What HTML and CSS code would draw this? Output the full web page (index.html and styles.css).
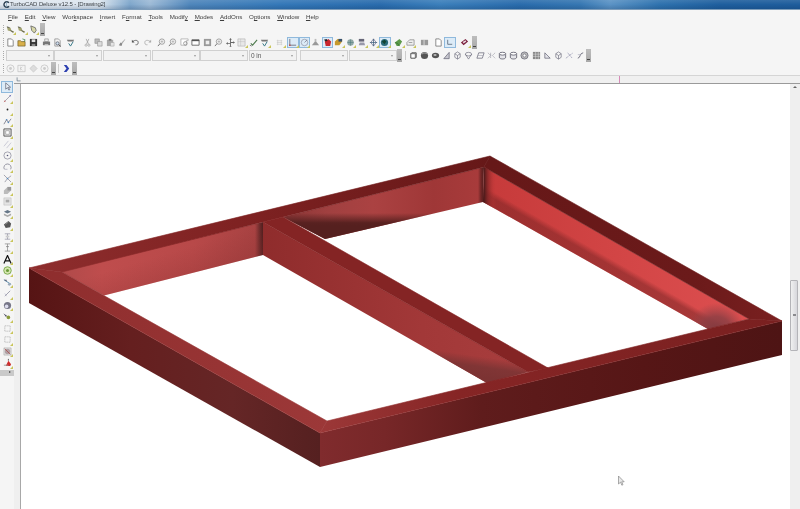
FILE: index.html
```html
<!DOCTYPE html>
<html lang="en">
<head>
<meta charset="utf-8">
<title>TurboCAD Deluxe v12.5 - [Drawing2]</title>
<link rel="stylesheet" href="styles.css">
</head>
<body>
<svg class="defs" width="0" height="0" aria-hidden="true">
  <symbol id="page" viewBox="0 0 10 10"><path d="M2 1h4l2 2v6H2z" fill="#fff" stroke="#666" stroke-width=".8"/></symbol>
  <symbol id="open" viewBox="0 0 10 10"><path d="M1 3h3l1 1h4v5H1z" fill="#d8b04a" stroke="#665520" stroke-width=".7"/><path d="M6 1l3 1-1 2" fill="none" stroke="#2f7a3a" stroke-width=".8"/></symbol>
  <symbol id="save" viewBox="0 0 10 10"><path d="M1 1h8v8H1z" fill="#333"/><path d="M3 1.500h4v3H3z" fill="#ddd"/><path d="M3 6.500h4V9H3z" fill="#888"/></symbol>
  <symbol id="print" viewBox="0 0 10 10"><path d="M3 1h4v3H3z" fill="#eee" stroke="#777" stroke-width=".6"/><path d="M1 4h8v4H1z" fill="#777"/><path d="M3 7h4v2H3z" fill="#ddd"/></symbol>
  <symbol id="prev" viewBox="0 0 10 10"><path d="M2 1h4l2 2v6H2z" fill="#f4f4f4" stroke="#777" stroke-width=".7"/><circle cx="5" cy="6" r="1.800" fill="#cfe0ee" stroke="#445" stroke-width=".7"/><path d="M6.300 7.300L8.600 9.400" stroke="#333"/></symbol>
  <symbol id="spell" viewBox="0 0 10 10"><path d="M1 2h8l-1 2H2z" fill="#777"/><path d="M3 6l2 3 3-5" fill="none" stroke="#3a7a8a" stroke-width="1.100"/></symbol>
  <symbol id="cut" viewBox="0 0 10 10"><path d="M3.500 1L6 6.500M6.500 1L4 6.500" stroke="#999" stroke-width=".8"/><circle cx="3.400" cy="8" r="1.200" fill="none" stroke="#999" stroke-width=".7"/><circle cx="6.600" cy="8" r="1.200" fill="none" stroke="#999" stroke-width=".7"/></symbol>
  <symbol id="copy" viewBox="0 0 10 10"><path d="M1 1h5v5H1z" fill="#bbb" stroke="#888" stroke-width=".6"/><path d="M4 4h5v5H4z" fill="#ddd" stroke="#888" stroke-width=".6"/></symbol>
  <symbol id="paste" viewBox="0 0 10 10"><path d="M1 2h7v7H1z" fill="#aaa"/><path d="M3 1h3v2H3z" fill="#777"/><path d="M5 5h4v4H5z" fill="#e4e4e4" stroke="#999" stroke-width=".5"/></symbol>
  <symbol id="brush" viewBox="0 0 10 10"><path d="M9 1L5 5l1 1 3-4z" fill="#aaa"/><path d="M2 8l2-3 2 1-1 3z" fill="#888"/></symbol>
  <symbol id="undo" viewBox="0 0 10 10"><path d="M2 4c2-2 6-2 6 1s-2 2.500-3 2.500" fill="none" stroke="#555" stroke-width=".9"/><path d="M1 2v3h3z" fill="#555"/></symbol>
  <symbol id="redo" viewBox="0 0 10 10"><path d="M8 4C6 2 2 2 2 5s2 2.500 3 2.500" fill="none" stroke="#aaa" stroke-width=".9"/><path d="M9 2v3H6z" fill="#aaa"/></symbol>
  <symbol id="zoom" viewBox="0 0 10 10"><circle cx="5.500" cy="4" r="3" fill="#f2f2f2" stroke="#888" stroke-width=".8"/><path d="M3.400 6.200L1 9" stroke="#777" stroke-width="1.100"/><path d="M4 4h3M5.500 2.500v3" stroke="#999" stroke-width=".6"/></symbol>
  <symbol id="zoomb" viewBox="0 0 10 10"><path d="M1 1h8v2H7v5H1z" fill="#fff" stroke="#999" stroke-width=".7"/><circle cx="6" cy="6" r="2" fill="none" stroke="#777" stroke-width=".7"/></symbol>
  <symbol id="win" viewBox="0 0 10 10"><path d="M1 2h8v6H1z" fill="#fff" stroke="#555" stroke-width=".9"/><path d="M1 2h8v1.500H1z" fill="#555"/></symbol>
  <symbol id="fit" viewBox="0 0 10 10"><path d="M1 1h8v8H1z" fill="#999"/><path d="M3 3h4v4H3z" fill="#eee"/></symbol>
  <symbol id="pan" viewBox="0 0 10 10"><path d="M5 0l1.500 2h-1v2.500H8v-1l2 1.500-2 1.500v-1H5.500V9h1L5 10 3.500 9h1V6.500H2v1L0 6l2-1.500v1h2.500V2h-1z" fill="#666"/></symbol>
  <symbol id="grid" viewBox="0 0 10 10"><path d="M1 1h8v8H1z" fill="#e8e8e8" stroke="#aaa" stroke-width=".6"/><path d="M1 4h8M4 1v8" stroke="#bbb" stroke-width=".5"/></symbol>
  <symbol id="tick" viewBox="0 0 10 10"><path d="M2 6l2 2 5-6" fill="none" stroke="#4d7a4d" stroke-width="1.200"/><path d="M1 8l2 1" stroke="#777"/></symbol>
  <symbol id="dots" viewBox="0 0 10 10"><path d="M2 3h6M2 5h6M2 7h6M3 2v6M7 2v6" stroke="#c4c4c4" stroke-width=".6"/></symbol>
  <symbol id="ortho" viewBox="0 0 10 10"><path d="M2 1v7h7" fill="none" stroke="#556" stroke-width=".8"/><circle cx="2" cy="8" r=".9" fill="#c33"/></symbol>
  <symbol id="polar" viewBox="0 0 10 10"><circle cx="5" cy="5" r="3.600" fill="none" stroke="#889" stroke-width=".7"/><path d="M5 5L8 2" stroke="#667" stroke-width=".7"/></symbol>
  <symbol id="hat" viewBox="0 0 10 10"><path d="M1 8l4-5 4 5z" fill="#999"/><path d="M4 1h2v3H4z" fill="#bbb"/></symbol>
  <symbol id="red" viewBox="0 0 10 10"><path d="M2 4l4-3 3 3-1 5H3z" fill="#c8242c"/><path d="M1 2l3-1 1 2-2 1z" fill="#222"/></symbol>
  <symbol id="layer" viewBox="0 0 10 10"><path d="M1 4l3-3h5v3L6 8H1z" fill="#c69a2e"/><path d="M5 1h4v3H5z" fill="#35506e"/></symbol>
  <symbol id="ball" viewBox="0 0 10 10"><circle cx="5" cy="5" r="3.600" fill="#8fa7a5"/><path d="M1.500 5h7M5 1.500v7" stroke="#477" stroke-width=".5"/></symbol>
  <symbol id="stack" viewBox="0 0 10 10"><path d="M2 1h6v3H2z" fill="#667"/><path d="M3 5h5l1 3H2z" fill="#99a"/></symbol>
  <symbol id="cross" viewBox="0 0 10 10"><path d="M5 1l3 4-3 4-3-4z" fill="none" stroke="#668" stroke-width=".8"/><path d="M1 5h8M5 1v8" stroke="#3a5c7a" stroke-width=".8"/></symbol>
  <symbol id="globe" viewBox="0 0 10 10"><circle cx="5" cy="5" r="4" fill="#2a6a78"/><path d="M2 4l3-2 2 2-2 3z" fill="#143"/></symbol>
  <symbol id="leaf" viewBox="0 0 10 10"><path d="M1 5l5-4 3 3-3 5H3z" fill="#5d9a4a"/><path d="M1 5l3 1 2 3" fill="none" stroke="#2f6a2a" stroke-width=".7"/></symbol>
  <symbol id="stair" viewBox="0 0 10 10"><path d="M1 8V5l3-3h5v6z" fill="#eee" stroke="#777" stroke-width=".7"/><path d="M3 5h4" stroke="#777" stroke-width=".7"/></symbol>
  <symbol id="book" viewBox="0 0 10 10"><path d="M1 2h8v6H1z" fill="#999"/><path d="M4.500 2v6" stroke="#eee" stroke-width=".8"/></symbol>
  <symbol id="axes" viewBox="0 0 10 10"><path d="M3 2v5h5" fill="none" stroke="#567" stroke-width=".9"/></symbol>
  <symbol id="gem" viewBox="0 0 10 10"><path d="M1 5l5-4 3 3-5 4z" fill="#7a1f3c"/><path d="M3 4.500l3-2 1 1.500-3 2z" fill="#e8d8e0"/></symbol>
  <symbol id="box" viewBox="0 0 10 10"><path d="M2 3l1-1h5v5l-1 1H2z" fill="#fff" stroke="#333" stroke-width=".9"/><path d="M2 3h5v5" fill="none" stroke="#333" stroke-width=".7"/></symbol>
  <symbol id="sph" viewBox="0 0 10 10"><circle cx="5" cy="5" r="4" fill="#555"/><path d="M2 3.500c2-2 5-1.500 6.500 0" fill="none" stroke="#ccc" stroke-width=".8"/></symbol>
  <symbol id="torus" viewBox="0 0 10 10"><ellipse cx="5" cy="5" rx="4" ry="3" fill="#555"/><ellipse cx="4.500" cy="4.500" rx="1.800" ry=".8" fill="#ddd"/></symbol>
  <symbol id="wedge" viewBox="0 0 10 10"><path d="M2 8.500h6V1.500z" fill="#c8c8d0" stroke="#556" stroke-width=".7"/></symbol>
  <symbol id="wire" viewBox="0 0 10 10"><path d="M2 3l3-2 3 2v4l-3 2-3-2zM2 3l3 2 3-2M5 5v4" fill="none" stroke="#667" stroke-width=".7"/></symbol>
  <symbol id="wire2" viewBox="0 0 10 10"><ellipse cx="5" cy="3.500" rx="3.500" ry="2" fill="none" stroke="#667" stroke-width=".7"/><path d="M1.500 3.500L5 9l3.500-5.500" fill="none" stroke="#667" stroke-width=".7"/></symbol>
  <symbol id="skew" viewBox="0 0 10 10"><path d="M3 2h6L7 8H1z" fill="none" stroke="#667" stroke-width=".8"/><path d="M2 5h6" stroke="#99a" stroke-width=".6"/></symbol>
  <symbol id="star" viewBox="0 0 10 10"><path d="M1 2l3 3-3 3M9 2L6 5l3 3M4 2v6" fill="none" stroke="#778" stroke-width=".7" stroke-dasharray="1 .5"/></symbol>
  <symbol id="cyl" viewBox="0 0 10 10"><path d="M1.500 3v4c0 2.500 7 2.500 7 0V3" fill="#e6e6ea" stroke="#445" stroke-width=".8"/><ellipse cx="5" cy="3" rx="3.500" ry="1.600" fill="#fff" stroke="#445" stroke-width=".8"/></symbol>
  <symbol id="ring" viewBox="0 0 10 10"><circle cx="5" cy="5" r="4" fill="#bbb" stroke="#556" stroke-width=".7"/><circle cx="5" cy="5" r="1.700" fill="#fff" stroke="#556" stroke-width=".6"/></symbol>
  <symbol id="table" viewBox="0 0 10 10"><path d="M1 1h8v8H1z" fill="#888"/><path d="M1 3.500h8M1 6h8M4 1v8M7 1v8" stroke="#eee" stroke-width=".5"/></symbol>
  <symbol id="tri" viewBox="0 0 10 10"><path d="M2 8V2l6 6z" fill="#e4e4ea" stroke="#667" stroke-width=".8"/></symbol>
  <symbol id="dash" viewBox="0 0 10 10"><path d="M1 8l8-6M3 2l5 6" fill="none" stroke="#779" stroke-width=".8" stroke-dasharray="1.200 .8"/></symbol>
  <symbol id="curl" viewBox="0 0 10 10"><path d="M2 8c3 0 2-6 6-6" fill="none" stroke="#667" stroke-width="1"/><path d="M2 4h3" stroke="#aab" stroke-width=".7"/></symbol>
  <symbol id="nav" viewBox="0 0 10 10"><circle cx="5" cy="5" r="4" fill="#f4f4f4" stroke="#bbb" stroke-width=".7"/><circle cx="5" cy="5" r="1.600" fill="#ccc"/></symbol>
  <symbol id="navk" viewBox="0 0 10 10"><path d="M1 1.500h8v7H1z" fill="#f4f4f4" stroke="#bbb" stroke-width=".7"/><path d="M4 3v4M4 5l2-2M4 5l2 2" stroke="#bbb" stroke-width=".6"/></symbol>
  <symbol id="navd" viewBox="0 0 10 10"><path d="M5 1l4 4-4 4-4-4z" fill="#ddd" stroke="#bbb" stroke-width=".6"/></symbol>
  <symbol id="chev" viewBox="0 0 10 10"><path d="M2 1h3l3 4-3 4H2l3-4z" fill="#2c3fb0"/></symbol>
  <symbol id="tcad" viewBox="0 0 10 10"><path d="M8.500 2.500a4 4 0 1 0 0 5" fill="none" stroke="#2a3e50" stroke-width="2"/><path d="M5 1v8" stroke="#7fa0b8"/></symbol>
  <symbol id="t1" viewBox="0 0 10 10"><path d="M1 2l4 1 1 3 3 1-1 2-3-2-3-1z" fill="#a4a470"/><path d="M1 2l3 1M5 6l3 2" stroke="#444" stroke-width=".8"/></symbol>
  <symbol id="t2" viewBox="0 0 10 10"><path d="M2 1l5 2 1 3-2 3-3-3z" fill="#d8d8a8" stroke="#555" stroke-width=".8"/></symbol>
  <symbol id="sel" viewBox="0 0 10 10"><path d="M3 1v7l2-1.700L6.500 9l1-.5L6 5.800h2.500z" fill="#e8eef4" stroke="#556" stroke-width=".7"/></symbol>
  <symbol id="line" viewBox="0 0 10 10"><path d="M1 9l8-8" stroke="#889" stroke-width=".8"/><circle cx="2" cy="8" r=".9" fill="#c77"/><circle cx="8" cy="2" r=".9" fill="#77b"/></symbol>
  <symbol id="pt" viewBox="0 0 10 10"><circle cx="5" cy="5" r="1" fill="#222"/></symbol>
  <symbol id="poly" viewBox="0 0 10 10"><path d="M1 8l3-5 2 3 3-4" fill="none" stroke="#667" stroke-width=".8"/><circle cx="4" cy="3" r=".9" fill="#58b"/><circle cx="6" cy="6" r=".9" fill="#58b"/></symbol>
  <symbol id="rect" viewBox="0 0 10 10"><path d="M1 1h8v8H1z" fill="#e8e8e8" stroke="#444" stroke-width=".9"/><path d="M3 3h4v4H3z" fill="#fff" stroke="#777" stroke-width=".6"/></symbol>
  <symbol id="par" viewBox="0 0 10 10"><path d="M1 7l5-6M4 9l5-6" stroke="#bbc" stroke-width=".8"/></symbol>
  <symbol id="circ" viewBox="0 0 10 10"><circle cx="5" cy="5" r="4" fill="none" stroke="#889" stroke-width=".8"/><circle cx="5" cy="5" r=".9" fill="#557"/></symbol>
  <symbol id="arc" viewBox="0 0 10 10"><path d="M1.500 7a4 4 0 1 1 7 0" fill="none" stroke="#778" stroke-width=".8"/><path d="M5 7L2 7" stroke="#aab" stroke-width=".8"/></symbol>
  <symbol id="node" viewBox="0 0 10 10"><path d="M1 1l4 4 4-3M5 5L2 9M5 5l4 4" fill="none" stroke="#778" stroke-width=".7"/><circle cx="5" cy="5" r=".9" fill="#58b"/></symbol>
  <symbol id="blk" viewBox="0 0 10 10"><path d="M1 5l4-4h4v4L5 9H1z" fill="#bbb"/><path d="M5 1h4v4H5z" fill="#999"/></symbol>
  <symbol id="blk2" viewBox="0 0 10 10"><path d="M1 1h8v8H1z" fill="#e4e4e4" stroke="#bbb" stroke-width=".6"/><path d="M3 3h4v3H3z" fill="#aaa"/></symbol>
  <symbol id="lay" viewBox="0 0 10 10"><path d="M5 1l4 2-4 2-4-2z" fill="#678"/><path d="M1 5l4 2 4-2v2L5 9 1 7z" fill="#aaa"/></symbol>
  <symbol id="obl" viewBox="0 0 10 10"><path d="M1 5l5-4 3 3-1 4-5 1z" fill="#555"/><path d="M3 5l3-3" stroke="#aaa" stroke-width=".7"/></symbol>
  <symbol id="dim" viewBox="0 0 10 10"><path d="M2 2h6M2 8h6M5 2v6" stroke="#889" stroke-width=".7"/><path d="M3 4h4v2H3z" fill="#ccc"/></symbol>
  <symbol id="dim2" viewBox="0 0 10 10"><path d="M2 1h6M5 1v8M2 9h6" stroke="#888" stroke-width=".8"/><path d="M3.500 4h3" stroke="#888"/></symbol>
  <symbol id="bigA" viewBox="0 0 10 10"><path d="M1 9.500L5 .5l4 9M2.800 6.500h4.400" fill="none" stroke="#111" stroke-width="1.300"/></symbol>
  <symbol id="gcir" viewBox="0 0 10 10"><circle cx="5" cy="5" r="4.200" fill="#d6e6b0" stroke="#6aa03a" stroke-width=".9"/><circle cx="5" cy="5" r="1.700" fill="#6a9a3a"/></symbol>
  <symbol id="dimb" viewBox="0 0 10 10"><path d="M1 2l8 5" stroke="#58a"/><path d="M1 2l3 0 0 2z" fill="#556"/><circle cx="7" cy="7" r="1.500" fill="#9ab"/></symbol>
  <symbol id="pen" viewBox="0 0 10 10"><path d="M2 8l6-6" stroke="#99a" stroke-width="1"/><path d="M2 5l2 3" stroke="#bbc" stroke-width=".8"/></symbol>
  <symbol id="knob" viewBox="0 0 10 10"><circle cx="5" cy="5" r="4" fill="#778"/><circle cx="4" cy="6" r="2" fill="#dde"/></symbol>
  <symbol id="sprout" viewBox="0 0 10 10"><path d="M1 2l3 3" stroke="#667" stroke-width="1"/><circle cx="6" cy="6" r="2" fill="#8a9a3a"/><circle cx="3" cy="4" r="1" fill="#556"/></symbol>
  <symbol id="dgrid" viewBox="0 0 10 10"><path d="M2 2h6v6H2z" fill="none" stroke="#aaa" stroke-width=".8" stroke-dasharray="1.300 .7"/></symbol>
  <symbol id="ghost" viewBox="0 0 10 10"><path d="M1 1l8 0 0 8-8 0z" fill="#e0e0e0" stroke="#999" stroke-width=".5"/><circle cx="5" cy="5" r="3" fill="#b0a0a4"/><path d="M2 2l6 6" stroke="#a44" stroke-width=".8"/></symbol>
  <symbol id="flask" viewBox="0 0 10 10"><path d="M3 9l3-6 3 4-1 2z" fill="#d02a2a"/><path d="M1 8h5" stroke="#999"/><path d="M6 1v2" stroke="#555"/></symbol>
</svg>

<div class="app">
  <header class="title">
    <svg class="title-ico"><use href="#tcad"/></svg>
    <span class="title-text">TurboCAD Deluxe v12.5 - [Drawing2]</span>
  </header>

  <div class="chrome">
    <nav class="menu">
      <span><u>F</u>ile</span><span><u>E</u>dit</span><span><u>V</u>iew</span><span>Wor<u>k</u>space</span><span><u>I</u>nsert</span><span>F<u>o</u>rmat</span><span><u>T</u>ools</span><span>Modif<u>y</u></span><span><u>M</u>odes</span><span><u>A</u>ddOns</span><span>O<u>p</u>tions</span><span><u>W</u>indow</span><span><u>H</u>elp</span>
    </nav>

    <div class="row">
      <i class="dots"></i>
      <b class="b fly"><svg><use href="#t1"/></svg></b><b class="b fly"><svg><use href="#t1"/></svg></b><b class="b fly"><svg><use href="#t2"/></svg></b>
      <i class="grip"></i>
    </div>

    <div class="row">
      <i class="dots"></i>
      <b class="b"><svg><use href="#page"/></svg></b><b class="b"><svg><use href="#open"/></svg></b><b class="b"><svg><use href="#save"/></svg></b>
      <i class="sp s1"></i>
      <b class="b"><svg><use href="#print"/></svg></b><b class="b"><svg><use href="#prev"/></svg></b>
      <i class="sp s1"></i>
      <b class="b"><svg><use href="#spell"/></svg></b>
      <i class="sp s5"></i>
      <b class="b"><svg><use href="#cut"/></svg></b><b class="b"><svg><use href="#copy"/></svg></b><b class="b"><svg><use href="#paste"/></svg></b><b class="b"><svg><use href="#brush"/></svg></b>
      <i class="sp s2"></i>
      <b class="b"><svg><use href="#undo"/></svg></b><b class="b"><svg><use href="#redo"/></svg></b>
      <i class="sp s2"></i>
      <b class="b"><svg><use href="#zoom"/></svg></b><b class="b"><svg><use href="#zoom"/></svg></b><b class="b"><svg><use href="#zoomb"/></svg></b><b class="b"><svg><use href="#win"/></svg></b><b class="b"><svg><use href="#fit"/></svg></b><b class="b"><svg><use href="#zoom"/></svg></b>
      <b class="b"><svg><use href="#pan"/></svg></b><b class="b fly"><svg><use href="#grid"/></svg></b><b class="b"><svg><use href="#tick"/></svg></b><b class="b fly"><svg><use href="#spell"/></svg></b>
      <i class="sp s3"></i>
      <b class="b fly"><svg><use href="#dots"/></svg></b>
      <i class="sp s1"></i>
      <b class="b on fly"><svg><use href="#ortho"/></svg></b><b class="b on fly"><svg><use href="#polar"/></svg></b><b class="b"><svg><use href="#hat"/></svg></b><b class="b on"><svg><use href="#red"/></svg></b><b class="b fly"><svg><use href="#layer"/></svg></b><b class="b fly"><svg><use href="#ball"/></svg></b><b class="b fly"><svg><use href="#stack"/></svg></b><b class="b fly"><svg><use href="#cross"/></svg></b><b class="b on fly"><svg><use href="#globe"/></svg></b>
      <i class="sp s2"></i>
      <b class="b fly"><svg><use href="#leaf"/></svg></b><b class="b fly"><svg><use href="#stair"/></svg></b>
      <i class="sp s2"></i>
      <b class="b"><svg><use href="#book"/></svg></b>
      <i class="sp s2"></i>
      <b class="b"><svg><use href="#page"/></svg></b><b class="b on"><svg><use href="#axes"/></svg></b>
      <i class="sp s3"></i>
      <b class="b fly"><svg><use href="#gem"/></svg></b>
      <i class="grip"></i>
    </div>

    <div class="row">
      <i class="dots combos-lead"></i>
      <div class="combos">
        <span class="combo"></span><span class="combo"></span><span class="combo"></span><span class="combo"></span><span class="combo"></span><span class="combo">0 in</span>
      </div>
      <div class="combos second">
        <span class="combo"></span><span class="combo"></span>
      </div>
      <i class="grip tight"></i>
      <i class="sep"></i>
      <b class="c"><svg><use href="#box"/></svg></b><b class="c"><svg><use href="#sph"/></svg></b><b class="c"><svg><use href="#torus"/></svg></b><b class="c"><svg><use href="#wedge"/></svg></b><b class="c"><svg><use href="#wire"/></svg></b><b class="c"><svg><use href="#wire2"/></svg></b><b class="c"><svg><use href="#skew"/></svg></b><b class="c"><svg><use href="#star"/></svg></b><b class="c"><svg><use href="#cyl"/></svg></b><b class="c"><svg><use href="#cyl"/></svg></b><b class="c"><svg><use href="#ring"/></svg></b><b class="c"><svg><use href="#table"/></svg></b><b class="c"><svg><use href="#tri"/></svg></b><b class="c"><svg><use href="#wire"/></svg></b><b class="c"><svg><use href="#dash"/></svg></b><b class="c"><svg><use href="#curl"/></svg></b>
      <i class="grip tight"></i>
    </div>

    <div class="row">
      <i class="dots"></i>
      <b class="b"><svg><use href="#nav"/></svg></b><b class="b"><svg><use href="#navk"/></svg></b><b class="b"><svg><use href="#navd"/></svg></b><b class="b"><svg><use href="#nav"/></svg></b>
      <i class="grip tight"></i>
      <i class="sep"></i>
      <b class="b"><svg><use href="#chev"/></svg></b>
      <i class="grip tight"></i>
    </div>

    <div class="hruler">
      <span class="corner"><svg><use href="#axes"/></svg></span>
      <i class="mark"></i>
    </div>
  </div>

  <main class="work">
    <aside class="tools">
      <div class="tool-list">
        <b class="t on"><svg><use href="#sel"/></svg></b>
        <b class="t fly"><svg><use href="#line"/></svg></b>
        <b class="t fly"><svg><use href="#pt"/></svg></b>
        <b class="t fly"><svg><use href="#poly"/></svg></b>
        <b class="t fly"><svg><use href="#rect"/></svg></b>
        <b class="t fly"><svg><use href="#par"/></svg></b>
        <b class="t fly"><svg><use href="#circ"/></svg></b>
        <b class="t fly"><svg><use href="#arc"/></svg></b>
        <b class="t fly"><svg><use href="#node"/></svg></b>
        <b class="t fly"><svg><use href="#blk"/></svg></b>
        <b class="t fly"><svg><use href="#blk2"/></svg></b>
        <b class="t fly"><svg><use href="#lay"/></svg></b>
        <b class="t fly"><svg><use href="#obl"/></svg></b>
        <b class="t fly"><svg><use href="#dim"/></svg></b>
        <b class="t fly"><svg><use href="#dim2"/></svg></b>
        <b class="t fly"><svg><use href="#bigA"/></svg></b>
        <b class="t fly"><svg><use href="#gcir"/></svg></b>
        <b class="t fly"><svg><use href="#dimb"/></svg></b>
        <b class="t fly"><svg><use href="#pen"/></svg></b>
        <b class="t fly"><svg><use href="#knob"/></svg></b>
        <b class="t fly"><svg><use href="#sprout"/></svg></b>
        <b class="t fly"><svg><use href="#dgrid"/></svg></b>
        <b class="t fly"><svg><use href="#dgrid"/></svg></b>
        <b class="t fly"><svg><use href="#ghost"/></svg></b>
        <b class="t fly"><svg><use href="#flask"/></svg></b>
      </div>
      <div class="tool-tab"><i></i></div>
    </aside>
    <div class="vruler"></div>

    <svg class="drawing" viewBox="21 84 769 425" preserveAspectRatio="none" role="img" aria-label="3D red frame">
      <defs>
        <linearGradient id="gLeft" gradientUnits="userSpaceOnUse" x1="29" y1="0" x2="320" y2="0"><stop offset="0" stop-color="#561414"/><stop offset=".35" stop-color="#651f1f"/><stop offset=".7" stop-color="#652626"/><stop offset="1" stop-color="#552020"/></linearGradient>
        <linearGradient id="gFront" gradientUnits="userSpaceOnUse" x1="320" y1="0" x2="782" y2="0"><stop offset="0" stop-color="#802b2d"/><stop offset=".14" stop-color="#772728"/><stop offset=".35" stop-color="#5f1c1c"/><stop offset=".7" stop-color="#561616"/><stop offset="1" stop-color="#4e1414"/></linearGradient>
        <linearGradient id="gBack" gradientUnits="userSpaceOnUse" x1="29" y1="0" x2="490" y2="0"><stop offset="0" stop-color="#8e2d2d"/><stop offset=".45" stop-color="#7f2222"/><stop offset="1" stop-color="#661818"/></linearGradient>
        <linearGradient id="gRight" gradientUnits="userSpaceOnUse" x1="490" y1="0" x2="782" y2="0"><stop offset="0" stop-color="#661818"/><stop offset=".7" stop-color="#6b1a1a"/><stop offset="1" stop-color="#7a2020"/></linearGradient>
        <linearGradient id="gLeftTop" gradientUnits="userSpaceOnUse" x1="29" y1="0" x2="327" y2="0"><stop offset="0" stop-color="#8e2d2d"/><stop offset="1" stop-color="#9c3838"/></linearGradient>
        <linearGradient id="gFrontTop" gradientUnits="userSpaceOnUse" x1="320" y1="0" x2="782" y2="0"><stop offset="0" stop-color="#9c3838"/><stop offset=".3" stop-color="#862525"/><stop offset="1" stop-color="#7a2020"/></linearGradient>
        <linearGradient id="gWallA" gradientUnits="userSpaceOnUse" x1="62" y1="0" x2="263" y2="0"><stop offset="0" stop-color="#b04a4a"/><stop offset=".2" stop-color="#bf4d4d"/><stop offset=".65" stop-color="#b84949"/><stop offset=".96" stop-color="#a84242"/><stop offset=".985" stop-color="#6a2a2a"/><stop offset="1" stop-color="#4f1e1e"/></linearGradient>
        <linearGradient id="gWallAshade" gradientUnits="userSpaceOnUse" x1="120" y1="240" x2="135" y2="290"><stop offset="0" stop-color="#8a3030" stop-opacity="0"/><stop offset=".5" stop-color="#8a3030" stop-opacity="0"/><stop offset="1" stop-color="#8a3030" stop-opacity=".25"/></linearGradient>
        <linearGradient id="gBeam" gradientUnits="userSpaceOnUse" x1="263" y1="0" x2="528" y2="0"><stop offset="0" stop-color="#8f2c2c"/><stop offset=".6" stop-color="#a23838"/><stop offset="1" stop-color="#a83e3e"/></linearGradient>
        <linearGradient id="gBeamEnd" gradientUnits="userSpaceOnUse" x1="490" y1="358" x2="487" y2="378"><stop offset="0" stop-color="#7a3434" stop-opacity="0"/><stop offset=".5" stop-color="#7a3434" stop-opacity=".85"/><stop offset="1" stop-color="#7c3333"/></linearGradient>
        <linearGradient id="gWallB" gradientUnits="userSpaceOnUse" x1="283" y1="0" x2="484" y2="0"><stop offset="0" stop-color="#8a3535"/><stop offset=".22" stop-color="#a04040"/><stop offset=".45" stop-color="#ab4242"/><stop offset=".75" stop-color="#9f3737"/><stop offset=".97" stop-color="#a83b3b"/><stop offset=".985" stop-color="#702626"/><stop offset="1" stop-color="#4f1c1c"/></linearGradient>
        <linearGradient id="gWallBdark" gradientUnits="userSpaceOnUse" x1="0" y1="213" x2="0" y2="226"><stop offset="0" stop-color="#55201f" stop-opacity="0"/><stop offset=".75" stop-color="#55201f" stop-opacity=".95"/><stop offset="1" stop-color="#55201f"/></linearGradient>
        <linearGradient id="gWallC" gradientUnits="userSpaceOnUse" x1="484" y1="0" x2="749" y2="0"><stop offset="0" stop-color="#c63a3a"/><stop offset=".5" stop-color="#d24545"/><stop offset="1" stop-color="#dd4f50"/></linearGradient>
        <linearGradient id="gWallCedge" gradientUnits="userSpaceOnUse" x1="610" y1="228" x2="594" y2="256"><stop offset="0" stop-color="#6a2020" stop-opacity="0"/><stop offset=".82" stop-color="#6a2020" stop-opacity="0"/><stop offset="1" stop-color="#6a2020" stop-opacity=".45"/></linearGradient>
        <linearGradient id="gWallCside" gradientUnits="userSpaceOnUse" x1="484" y1="0" x2="496" y2="0"><stop offset="0" stop-color="#4c1a1a"/><stop offset=".3" stop-color="#7e2525" stop-opacity=".8"/><stop offset="1" stop-color="#c63a3a" stop-opacity="0"/></linearGradient>
        <radialGradient id="gWallCend" gradientUnits="userSpaceOnUse" cx="716" cy="333" r="30"><stop offset="0" stop-color="#7f3a3f"/><stop offset=".55" stop-color="#8e3f44" stop-opacity=".85"/><stop offset="1" stop-color="#9a4448" stop-opacity="0"/></radialGradient>
      </defs>

      <polygon points="29,268 320,433 320,467 29,303" fill="url(#gLeft)"/>
      <polygon points="320,433 782,321 782,355 320,467" fill="url(#gFront)"/>

      <polygon points="60,271 263,222 263,255 104,295.500" fill="url(#gWallA)"/>
      <polygon points="60,271 263,222 263,255 104,295.500" fill="url(#gWallAshade)"/>
      <polygon points="263,222 528,372 487,383 263,255" fill="url(#gBeam)"/>
      <polygon points="263,222 528,372 487,383 263,255" fill="url(#gBeamEnd)"/>
      <polygon points="283,217 484,167 483,202 325,239" fill="url(#gWallB)"/>
      <polygon points="283,217 484,167 483,202 325,239" fill="url(#gWallBdark)"/>
      <polygon points="484,167 749,319 708,329 483,202" fill="url(#gWallC)"/>
      <polygon points="484,167 749,319 708,329 483,202" fill="url(#gWallCedge)"/>
      <polygon points="484,167 749,319 708,329 483,202" fill="url(#gWallCside)"/>
      <polygon points="484,167 749,319 708,329 483,202" fill="url(#gWallCend)"/>

      <polygon class="seam" points="29,268 490,156 484,167 283,217 263,222 62,272" fill="url(#gBack)" stroke="url(#gBack)"/>
      <polygon class="seam" points="490,156 782,321 749,319 484,167" fill="url(#gRight)" stroke="url(#gRight)"/>
      <polygon class="seam" points="29,268 62,272 327,421 320,433" fill="url(#gLeftTop)" stroke="url(#gLeftTop)"/>
      <polygon class="seam" points="320,433 327,421 749,319 782,321" fill="url(#gFrontTop)" stroke="url(#gFrontTop)"/>
      <polygon class="seam" points="263,222 283,217 548,368 528,372" fill="#842424" stroke="#842424"/>

      <path class="cursor" d="M618.500 476v8l2-1.800 1.300 3 1.200-.5-1.300-2.900h2.500z"/>
    </svg>

    <div class="vscroll">
      <i class="up"></i>
      <i class="thumb"></i>
    </div>
  </main>
</div>
</body>
</html>
```
FILE: styles.css
```css
* { box-sizing: border-box; }
html, body { margin: 0; padding: 0; height: 100%; overflow: hidden; background: #f5f5f5; }
.defs { position: absolute; }
.app { width: 800px; height: 509px; display: flex; flex-direction: column; font-family: "Liberation Sans", Arial, sans-serif; color: #333; }

.title {
  height: 10px; flex: none; display: flex; align-items: center; padding-left: 3px;
  background:
    linear-gradient(to bottom, rgba(255,255,255,.1), rgba(255,255,255,0) 50%, rgba(0,30,70,.18)),
    linear-gradient(to right, #e2e9f1 0, #dbe5ee 100px, #7ea6cb 130px, #9dbad6 150px, #4f86bb 190px, #3478b8 280px, #2a6cad 380px, #3b7fbb 440px, #2a6cac 520px, #3677b2 580px, #5b93c5 610px, #2e72ae 660px, #1f5f9e 720px, #1f5d9c 800px);
  border-bottom: 1px solid #7e9dba;
}
.title-ico { width: 7px; height: 7px; flex: none; }
.title-text { font-size: 6px; letter-spacing: -.1px; line-height: 9px; color: #3a3f44; white-space: nowrap; filter: blur(.25px); }

.chrome { flex: none; background: #f5f5f5; filter: blur(.45px); position: relative; }
.menu { height: 13px; display: flex; align-items: center; padding-left: 8px; gap: 6.750px; font-size: 6.200px; color: #3c3c3c; white-space: nowrap; }
.menu u { text-decoration-thickness: .5px; }

.row { height: 13px; display: flex; align-items: center; padding-left: 3px; }
.dots { width: 1px; height: 9px; flex: none; margin-right: .5px; background: repeating-linear-gradient(to bottom, #aaa 0 1px, transparent 1px 2px); }
.combos-lead { margin-right: .5px; }
.b { position: relative; flex: none; width: 11.500px; height: 11.500px; display: flex; align-items: center; justify-content: center; }
.c { flex: none; width: 11.200px; height: 11px; display: flex; align-items: center; justify-content: center; }
.b svg, .c svg, .t svg { width: 9px; height: 9px; display: block; }
.on { background: #dcebf7; box-shadow: inset 0 0 0 1px #8fb9dc; }
.fly::after { content: ""; position: absolute; right: 0; bottom: 0; border-style: solid; border-width: 0 0 3px 3px; border-color: transparent transparent #c9c55a transparent; }
.sp { flex: none; display: block; }
.s1 { width: 1.500px; }
.s2 { width: 2.500px; }
.s3 { width: 3.500px; }
.s5 { width: 5px; }
.sep { flex: none; width: 1px; height: 9px; margin: 0 1.500px 0 2.500px; background: #ccc; }
.grip { flex: none; width: 5px; height: 13px; margin-left: 1px; background: linear-gradient(to bottom, #bdbdbd, #a8a8a8); position: relative; }
.grip::after { content: ""; position: absolute; left: 1px; right: 1px; bottom: 2px; height: 1px; background: #444; }
.grip.tight { margin-left: 0; }

.combos { display: flex; gap: .7px; flex: none; margin-left: 1px; }
.combos.second { margin-left: 3px; gap: 1.500px; }
.combo { position: relative; flex: none; width: 48px; height: 11px; background: #f2f2f2; border: 1px solid #d0d0d0; font-size: 6.500px; line-height: 9px; padding-left: 1px; color: #555; white-space: nowrap; }
.combo::after { content: ""; position: absolute; right: 3px; top: 3.500px; border-style: solid; border-width: 2px 1.500px 0; border-color: #999 transparent transparent; }

.hruler { height: 9px; position: relative; background: #f0f0f0; border-top: 1px solid #d5d5d5; border-bottom: 1px solid #9a9a9a; padding-left: 15px; }
.corner { display: block; width: 7px; height: 7px; }
.corner svg { display: block; width: 7px; height: 7px; }
.mark { position: absolute; left: 619px; top: 0; width: 1px; height: 7px; background: #d78ab8; }

.work { flex: 1; min-height: 0; display: flex; }
.tools { flex: none; width: 14px; margin-top: -3px; z-index: 1; display: flex; flex-direction: column; background: #f5f5f5; filter: blur(.4px); }
.tool-list { display: flex; flex-direction: column; padding: 0 1px 0 1px; }
.t { position: relative; flex: none; width: 12px; height: 11.500px; display: flex; align-items: center; justify-content: center; }
.tool-tab { height: 6px; margin-top: 1px; background: #c9c9c9; position: relative; }
.tool-tab i { position: absolute; right: 3px; top: 1.500px; border-style: solid; border-width: 1.500px 0 1.500px 2px; border-color: transparent transparent transparent #444; }
.vruler { flex: none; width: 7px; background: #efefef; border-right: 1px solid #a8a8a8; }
.drawing { flex: none; width: 769px; height: 425px; display: block; background: #fff; }
.seam { stroke-width: .6; stroke-linejoin: round; }
.cursor { fill: #e8e8e8; stroke: #777; stroke-width: .6; }
.vscroll { flex: none; width: 10px; position: relative; background: #efefef; }
.up { position: absolute; left: 3px; top: 2px; border-style: solid; border-width: 0 2px 2.500px; border-color: transparent transparent #666; }
.thumb { position: absolute; left: 0; right: 2px; top: 196px; height: 71px; background: linear-gradient(to right, #f0f0f0, #d7d7dc); border: 1px solid #b4b4b8; border-radius: 1px; }
.thumb::after { content: ""; position: absolute; left: 2px; right: 1px; top: 33px; height: 2px; background: #8a8a8e; }
```
